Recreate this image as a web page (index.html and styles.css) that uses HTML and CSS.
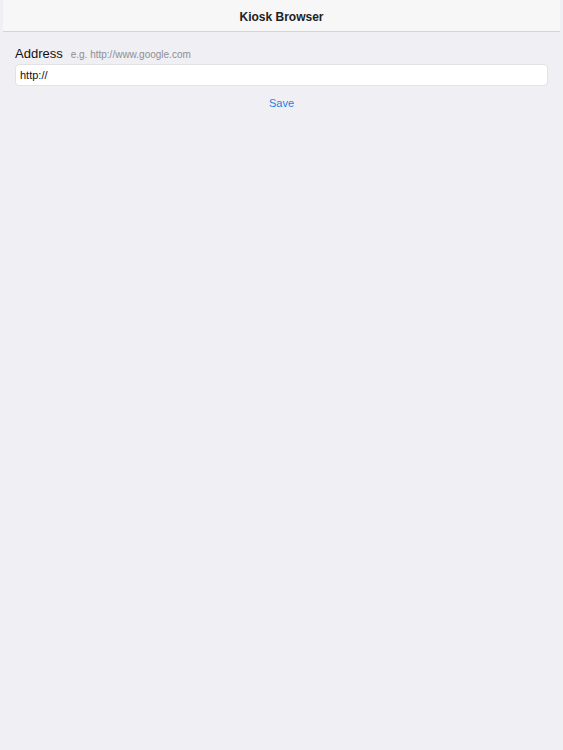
FILE: index.html
```html
<!DOCTYPE html>
<html>
<head>
<meta charset="utf-8">
<link rel="stylesheet" href="styles.css">
</head>
<body>
<header class="navbar"><span class="title">Kiosk Browser</span></header>
<main class="content">
  <div class="label-row">
    <span class="label">Address</span>
    <span class="hint">e.g. http://www.google.com</span>
  </div>
  <div class="field">http://</div>
  <div class="actions"><span class="save">Save</span></div>
</main>
</body>
</html>
```
FILE: styles.css
```css
html, body {
  margin: 0;
  padding: 0;
  height: 100%;
}
body {
  background: #efeff4;
  font-family: "Liberation Sans", Arial, sans-serif;
  color: #000;
}
.navbar {
  margin: 0 3px;
  height: 31px;
  background: #f7f7f8;
  border-bottom: 1px solid #d3d3d8;
  display: flex;
  align-items: center;
  justify-content: center;
}
.title {
  font-size: 12px;
  font-weight: bold;
  color: #222;
  padding-top: 2px;
}
.content {
  padding: 0 15px;
}
.label-row {
  margin-top: 14px;
  height: 16px;
  display: flex;
  align-items: center;
  gap: 8px;
}
.label {
  font-size: 13px;
  line-height: 16px;
  color: #111;
}
.hint {
  font-size: 10px;
  line-height: 16px;
  color: #8e8e93;
  padding-top: 1px;
}
.field {
  margin-top: 2px;
  height: 22px;
  box-sizing: border-box;
  background: #fff;
  border: 1px solid #e2e2e6;
  border-radius: 4px;
  padding: 0 4px;
  display: flex;
  align-items: center;
  font-size: 11px;
  color: #111;
}
.actions {
  margin-top: 10px;
  display: flex;
  justify-content: center;
}
.save {
  font-size: 11px;
  line-height: 14px;
  color: #1f7fe6;
}
```
